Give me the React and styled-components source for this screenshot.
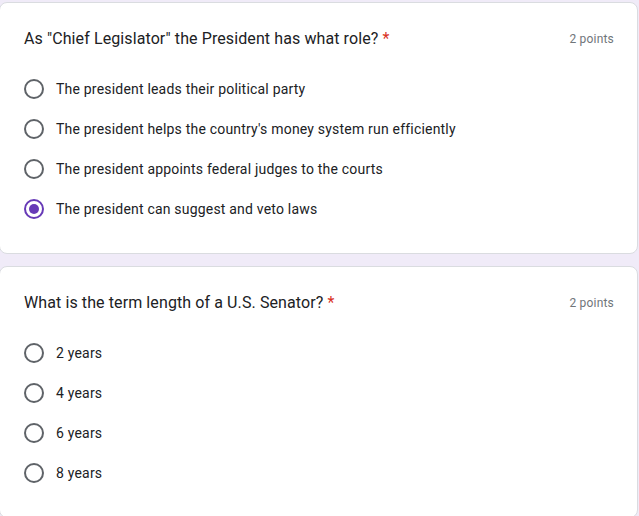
import React from "react";
import styled, { createGlobalStyle } from "styled-components";

const questions = [
  {
    title: 'As "Chief Legislator" the President has what role?',
    points: "2 points",
    options: [
      "The president leads their political party",
      "The president helps the country's money system run efficiently",
      "The president appoints federal judges to the courts",
      "The president can suggest and veto laws",
    ],
    selected: 3,
  },
  {
    title: "What is the term length of a U.S. Senator?",
    points: "2 points",
    options: ["2 years", "4 years", "6 years", "8 years"],
    selected: -1,
  },
];

function App() {
  return (
    <>
      <GlobalStyle />
      <Page>
        {questions.map((q, qi) => (
          <Card key={qi}>
            <Header>
              <Title>
                {q.title} <Required>*</Required>
              </Title>
              <Points>{q.points}</Points>
            </Header>
            <Options>
              {q.options.map((opt, oi) => (
                <Option key={oi}>
                  <Radio $checked={oi === q.selected} />
                  <Label>{opt}</Label>
                </Option>
              ))}
            </Options>
          </Card>
        ))}
      </Page>
    </>
  );
}

export default App;

const GlobalStyle = createGlobalStyle`
  html, body {
    margin: 0;
    padding: 0;
    background: #f0ebf8;
  }
`;

const Page = styled.div`
  display: flex;
  flex-direction: column;
  gap: 12px;
  padding: 2px 1px 0 0;
  margin-left: -1px;
  font-family: Roboto, "Liberation Sans", Arial, sans-serif;
  color: #202124;
`;

const Card = styled.div`
  background: #fff;
  border: 1px solid #dadce0;
  border-radius: 8px;
  padding: 24px 23px 24px 24px;
`;

const Header = styled.div`
  display: flex;
  justify-content: space-between;
  align-items: flex-start;
`;

const Title = styled.div`
  font-size: 16px;
  line-height: 24px;
  letter-spacing: 0.1px;
  color: #202124;
`;

const Required = styled.span`
  color: #d93025;
`;

const Points = styled.div`
  font-size: 12px;
  line-height: 24px;
  color: #70757a;
  letter-spacing: 0.2px;
`;

const Options = styled.div`
  display: flex;
  flex-direction: column;
  margin-top: 18px;
`;

const Option = styled.div`
  display: flex;
  align-items: center;
  height: 40px;
  gap: 12px;
`;

const Radio = styled.div`
  box-sizing: border-box;
  width: 20px;
  height: 20px;
  border-radius: 50%;
  border: 2px solid ${(p) => (p.$checked ? "#673ab7" : "#5f6368")};
  display: flex;
  align-items: center;
  justify-content: center;
  flex-shrink: 0;

  &::after {
    content: "";
    display: ${(p) => (p.$checked ? "block" : "none")};
    width: 10px;
    height: 10px;
    border-radius: 50%;
    background: #673ab7;
  }
`;

const Label = styled.div`
  font-size: 14px;
  line-height: 20px;
  letter-spacing: 0.2px;
  color: #202124;
`;
